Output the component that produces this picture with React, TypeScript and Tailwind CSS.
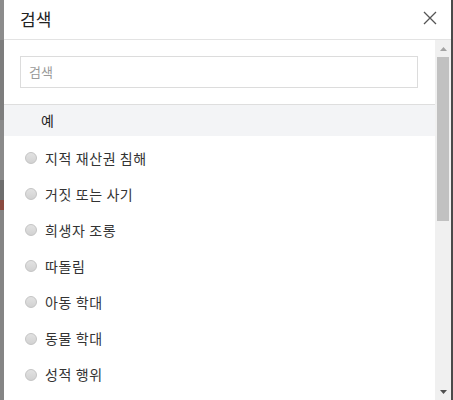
import React from "react";

const items = [
  "지적 재산권 침해",
  "거짓 또는 사기",
  "희생자 조롱",
  "따돌림",
  "아동 학대",
  "동물 학대",
  "성적 행위",
];

const font = { fontFamily: '"Noto Sans CJK KR", "Noto Sans", sans-serif' };

export default function App() {
  return (
    <div className="w-[453px] h-[400px] flex overflow-hidden bg-white" style={font}>
      <div className="w-[4px] h-full bg-[#858585] flex flex-col">
        <div className="h-[40px] bg-[#8c8c8c]" />
        <div className="h-[80px] bg-[#7d7d7d]" />
        <div className="h-[60px] bg-[#8a8a8a]" />
        <div className="h-[20px] bg-[#6e6e6e]" />
        <div className="h-[10px] bg-[#8a4a40]" />
        <div className="flex-1 bg-[#858585]" />
      </div>
      <div className="w-[447px] h-full bg-white flex flex-col">
        <div className="h-[40px] shrink-0 flex items-center justify-between pl-[16px] pr-[14px] border-b border-[#e3e3e3]">
          <span className="text-[17px] text-[#222] leading-none -mt-[2px]">검색</span>
          <svg width="14" height="14" viewBox="0 0 14 14" className="-mt-[4px]">
            <path d="M1 1L13 13M13 1L1 13" stroke="#555" strokeWidth="1.3" fill="none" />
          </svg>
        </div>
        <div className="flex-1 flex min-h-0">
          <div className="w-[431px] flex flex-col">
            <div className="pt-[16px] pl-[16px] pr-[17px]">
              <div className="h-[32px] border border-[#dcdcdc] flex items-center pl-[8px] text-[13px] text-[#9a9a9a]">
                검색
              </div>
            </div>
            <div className="mt-[16px] h-[32px] bg-[#f3f4f6] border-t border-[#dedede] flex items-center pl-[37px] text-[14px] text-[#222]">
              예
            </div>
            <div className="pt-[4px]">
              {items.map((t) => (
                <div key={t} className="h-[36.1px] flex items-center pl-[21px] gap-[8px]">
                  <div className="w-[12px] h-[12px] rounded-full border border-[#c4c4c4] bg-gradient-to-b from-[#e2e2e2] to-[#d2d2d2]" />
                  <span className="text-[14px] text-[#333] tracking-[0.6px]">{t}</span>
                </div>
              ))}
            </div>
          </div>
          <div className="w-[16px] bg-[#f0f0f0] flex flex-col items-center">
            <div className="h-[17px] flex items-center justify-center">
              <svg width="7" height="4" viewBox="0 0 7 4"><path d="M3.5 0L7 4H0Z" fill="#a3a3a3" /></svg>
            </div>
            <div className="w-[12px] h-[164px] bg-[#c1c1c1]" />
            <div className="flex-1" />
            <div className="h-[17px] flex items-center justify-center">
              <svg width="7" height="4" viewBox="0 0 7 4"><path d="M0 0H7L3.5 4Z" fill="#505050" /></svg>
            </div>
          </div>
        </div>
      </div>
      <div className="w-[2px] h-full bg-[#4a4a4a]" />
    </div>
  );
}
